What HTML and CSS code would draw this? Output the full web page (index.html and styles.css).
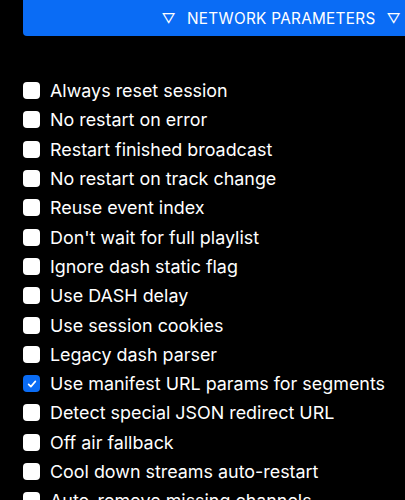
FILE: index.html
```html
<!DOCTYPE html>
<html>
<head>
<meta charset="utf-8">
<link rel="stylesheet" href="styles.css">
</head>
<body>
<div class="header"><span class="tri">▽</span><span class="title">NETWORK PARAMETERS</span><span class="tri">▽</span></div>
<ul class="list">
<li class="row"><span class="box"></span><span class="label">Always reset session</span></li>
<li class="row"><span class="box"></span><span class="label">No restart on error</span></li>
<li class="row"><span class="box"></span><span class="label">Restart finished broadcast</span></li>
<li class="row"><span class="box"></span><span class="label">No restart on track change</span></li>
<li class="row"><span class="box"></span><span class="label">Reuse event index</span></li>
<li class="row"><span class="box"></span><span class="label">Don't wait for full playlist</span></li>
<li class="row"><span class="box"></span><span class="label">Ignore dash static flag</span></li>
<li class="row"><span class="box"></span><span class="label">Use DASH delay</span></li>
<li class="row"><span class="box"></span><span class="label">Use session cookies</span></li>
<li class="row"><span class="box"></span><span class="label">Legacy dash parser</span></li>
<li class="row"><span class="box checked"><svg viewBox="0 0 16 16" width="12" height="12"><path d="M3.5 8.5 L6.5 11.5 L12.5 4.5" fill="none" stroke="#fff" stroke-width="2.2" stroke-linecap="round" stroke-linejoin="round"/></svg></span><span class="label">Use manifest URL params for segments</span></li>
<li class="row"><span class="box"></span><span class="label">Detect special JSON redirect URL</span></li>
<li class="row"><span class="box"></span><span class="label">Off air fallback</span></li>
<li class="row"><span class="box"></span><span class="label">Cool down streams auto-restart</span></li>
<li class="row"><span class="box"></span><span class="label">Auto-remove missing channels</span></li>
</ul>
</body>
</html>
```

FILE: styles.css
```css
html, body {
  margin: 0;
  padding: 0;
  background: #000;
  overflow: hidden;
}
body {
  font-family: Inter, "Noto Sans", sans-serif;
  color: #fff;
  width: 405px;
  height: 500px;
}
.header {
  margin-left: 23px;
  width: 382px;
  height: 36px;
  background: #0a6cf5;
  border-radius: 0 0 0 4px;
  display: flex;
  align-items: center;
  justify-content: flex-end;
  gap: 11px;
  padding-right: 4px;
  box-sizing: border-box;
  font-size: 15.3px;
  letter-spacing: 0.3px;
}
.tri { font-size: 14px; }
.list {
  list-style: none;
  margin: 0;
  padding: 40px 0 0 23px;
}
.row {
  display: flex;
  align-items: center;
  height: 29.3px;
  gap: 10px;
}
.box {
  width: 17px;
  height: 17px;
  border-radius: 4px;
  background: #fff;
  display: flex;
  align-items: center;
  justify-content: center;
  flex: none;
}
.box.checked { background: #0a6cf5; }
.label {
  font-size: 17.9px;
  white-space: nowrap;
}
```
